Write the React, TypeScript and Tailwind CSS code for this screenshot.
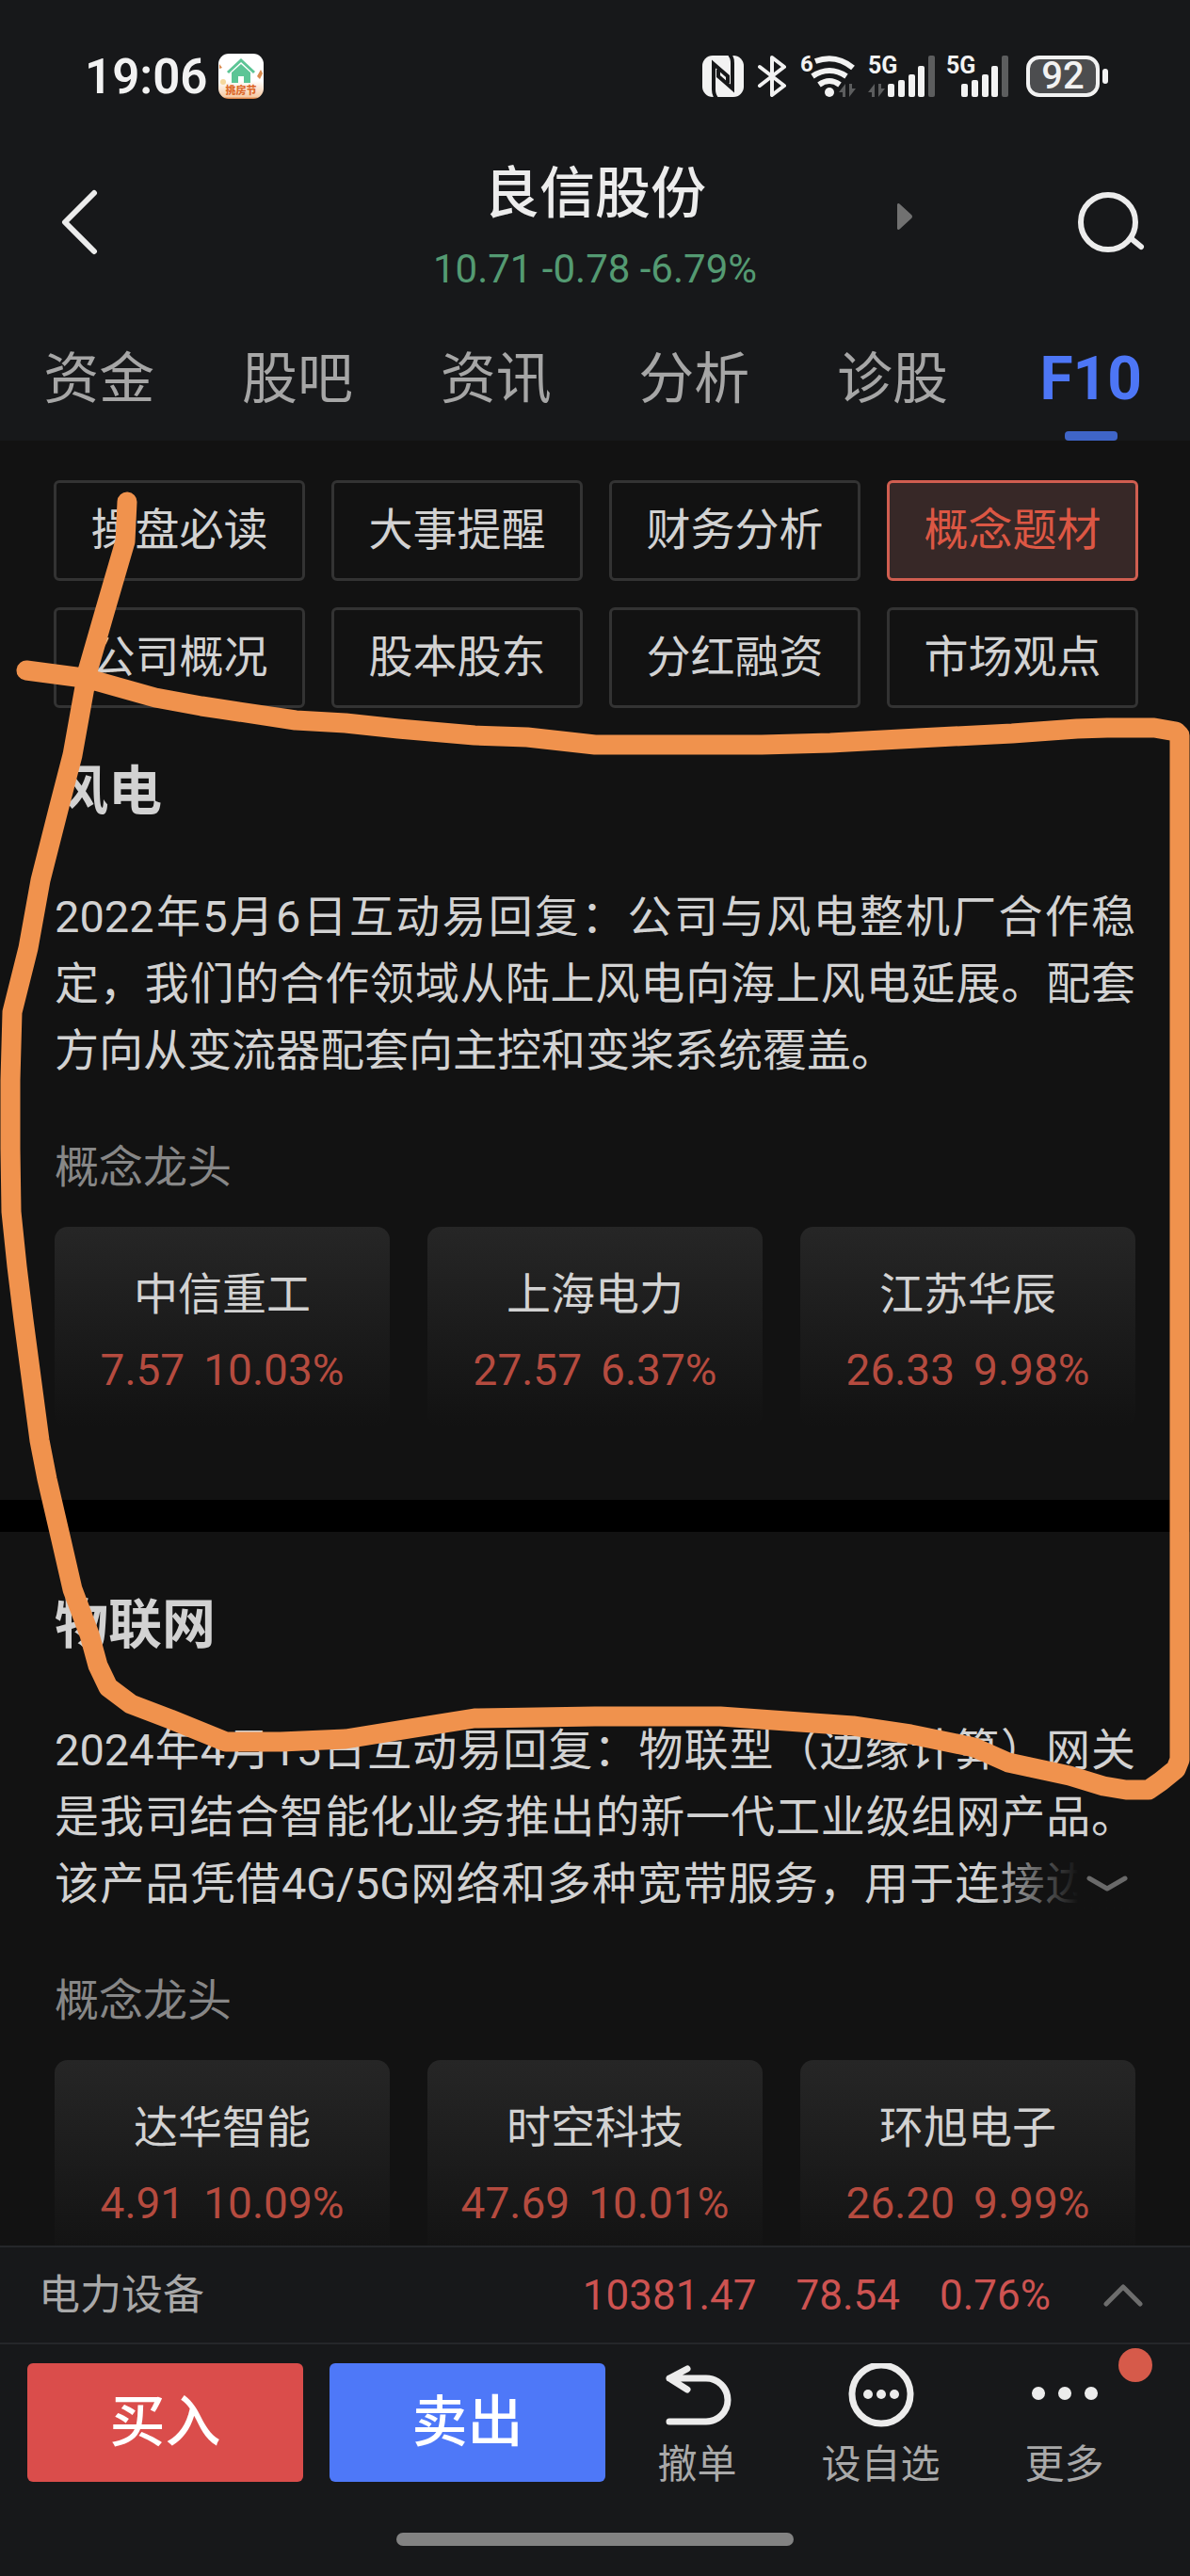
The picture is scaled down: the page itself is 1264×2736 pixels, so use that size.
import type { ReactNode } from "react";

type Stock = { name: string; price: string; change: string };

type Concept = {
  title: string;
  text: string;
  collapsed: boolean;
  leaders: Stock[];
};

const tabs = ["资金", "股吧", "资讯", "分析", "诊股", "F10"];

const sections = [
  "操盘必读",
  "大事提醒",
  "财务分析",
  "概念题材",
  "公司概况",
  "股本股东",
  "分红融资",
  "市场观点",
];

const concepts: Concept[] = [
  {
    title: "风电",
    text: "2022年5月6日互动易回复：公司与风电整机厂合作稳定，我们的合作领域从陆上风电向海上风电延展。配套方向从变流器配套向主控和变桨系统覆盖。",
    collapsed: false,
    leaders: [
      { name: "中信重工", price: "7.57", change: "10.03%" },
      { name: "上海电力", price: "27.57", change: "6.37%" },
      { name: "江苏华辰", price: "26.33", change: "9.98%" },
    ],
  },
  {
    title: "物联网",
    text: "2024年4月15日互动易回复：物联型（边缘计算）网关是我司结合智能化业务推出的新一代工业级组网产品。该产品凭借4G/5G网络和多种宽带服务，用于连接边缘",
    collapsed: true,
    leaders: [
      { name: "达华智能", price: "4.91", change: "10.09%" },
      { name: "时空科技", price: "47.69", change: "10.01%" },
      { name: "环旭电子", price: "26.20", change: "9.99%" },
    ],
  },
];

const DataArrows = ({ x }: { x: number }) => (
  <g fill="#5c5d5e">
    <path d={`M${x} 39l7-9v14h-3v-5z`} />
    <path d={`M${x + 18} 35l-7 9v-14h3v5z`} />
  </g>
);

const StatusBar = () => (
  <div className="flex h-[162px] items-center justify-between pl-[90px] pr-[87px]">
    <div className="flex items-center gap-3">
      <span className="text-[51px] font-semibold leading-none text-[#f2f2f2]">19:06</span>
      <svg className="h-12 w-12" viewBox="0 0 48 48" aria-hidden="true">
        <defs>
          <linearGradient id="appBase" x1="0" y1="0" x2="0" y2="1">
            <stop offset="0.6" stopColor="#ffffff" />
            <stop offset="0.95" stopColor="#f6cba6" />
            <stop offset="1" stopColor="#e07a36" />
          </linearGradient>
        </defs>
        <rect width="48" height="48" rx="11" fill="url(#appBase)" />
        <path d="M10 20L24 7l14 13" fill="none" stroke="#5cc596" strokeWidth="3" />
        <path d="M14 20l10-9 10 9v11h-7v-7h-6v7h-7z" fill="#5cc596" />
        <path d="M41 24l4-7 2 4-3 6zM1 11l3 4-3 1z" fill="#d98a4e" />
        <circle cx="5" cy="30" r="3" fill="#f5d79c" />
        <text x="24" y="43" textAnchor="middle" fontSize="11" fontWeight="900" fill="#dd6a2c">
          挑房节
        </text>
      </svg>
    </div>
    <div className="flex items-center gap-[14px]">
      <svg className="h-11 w-11" viewBox="0 0 44 44" aria-label="NFC">
        <rect width="44" height="44" rx="11" fill="#f2f2f2" />
        <g fill="none" stroke="#17181a" strokeWidth="4">
          <path d="M15 45Q12 42 12 36V9L27 22V29" />
          <path d="M29 -1Q32 2 32 8V35L17 22V15" />
        </g>
      </svg>
      <svg className="h-11 w-8" viewBox="0 0 32 44" aria-label="蓝牙">
        <path
          d="M3 12l26 20-13 10V2l13 10L3 32"
          fill="none"
          stroke="#f2f2f2"
          strokeWidth="4"
          strokeLinejoin="round"
          strokeLinecap="round"
        />
      </svg>
      <div className="mr-1 flex items-center gap-3">
        <svg className="h-11 w-[60px] overflow-visible" viewBox="0 0 60 44" aria-label="Wi-Fi">
          <text x="0" y="17" fontSize="24" fontWeight="700" fill="#f2f2f2">
            6
          </text>
          <g fill="none" stroke="#f2f2f2" strokeWidth="6">
            <path d="M16 6Q38-2 56 13" />
            <path d="M13 22Q31 10 49 22" />
            <path d="M20 31Q31 23 42 31" />
          </g>
          <circle cx="31" cy="39" r="5" fill="#f2f2f2" />
          <DataArrows x={41} />
        </svg>
        <svg className="h-11 w-[71px] overflow-visible" viewBox="0 0 71 44" aria-label="5G">
          <text x="0" y="19" fontSize="25" fontWeight="700" fill="#f2f2f2">
            5G
          </text>
          <DataArrows x={0} />
          <g fill="#f2f2f2">
            <rect x="21" y="30" width="7" height="14" rx="2" />
            <rect x="32" y="26" width="7" height="18" rx="2" />
            <rect x="43" y="20" width="7" height="24" rx="2" />
            <rect x="53" y="11" width="7" height="33" rx="2" />
          </g>
          <rect x="64" y="0" width="7" height="44" rx="2" fill="#5c5d5e" />
        </svg>
        <svg className="h-11 w-[67px] overflow-visible" viewBox="0 0 67 44" aria-label="5G">
          <text x="0" y="19" fontSize="25" fontWeight="700" fill="#f2f2f2">
            5G
          </text>
          <g fill="#f2f2f2">
            <rect x="16" y="30" width="7" height="14" rx="2" />
            <rect x="27" y="26" width="7" height="18" rx="2" />
            <rect x="38" y="20" width="7" height="24" rx="2" />
            <rect x="48" y="11" width="7" height="33" rx="2" />
          </g>
          <rect x="59" y="0" width="7" height="44" rx="2" fill="#5c5d5e" />
        </svg>
      </div>
      <div className="flex items-center gap-[3px]">
        <div className="flex h-11 w-[78px] items-center justify-center rounded-[14px] border-4 border-[#f2f2f2] bg-[#4c4d4f] text-[40px] font-medium leading-none text-[#f2f2f2]">
          92
        </div>
        <span className="h-4 w-[6px] rounded-sm bg-[#f2f2f2]" />
      </div>
    </div>
  </div>
);

const TitleBar = () => (
  <div className="grid h-[148px] grid-cols-3 items-center">
    <button aria-label="返回" className="w-fit pl-16">
      <svg className="h-[70px] w-[42px]" viewBox="0 0 42 70">
        <path
          d="M36 4L5 35l31 31"
          fill="none"
          stroke="#ececec"
          strokeWidth="6"
          strokeLinecap="round"
          strokeLinejoin="round"
        />
      </svg>
    </button>
    <div className="pt-2 text-center">
      <h1 className="text-[59px] font-medium leading-[72px] text-[#ececec]">良信股份</h1>
      <p className="mt-5 text-[42px] leading-[48px] text-[#549a72]">10.71 -0.78 -6.79%</p>
    </div>
    <div className="flex items-center justify-between pl-[110px] pr-12">
      <button aria-label="下一只">
        <svg className="mb-3 h-7 w-4" viewBox="0 0 16 28">
          <path d="M0 1Q1-1 3 1L15 12q2 2 0 4L3 27q-2 2-3 0z" fill="#717171" />
        </svg>
      </button>
      <button aria-label="搜索">
        <svg className="h-[72px] w-[72px]" viewBox="0 0 72 72">
          <g fill="none" stroke="#ececec" strokeWidth="6" strokeLinecap="round">
            <circle cx="33" cy="36" r="29" />
            <path d="M57 53l11 9" />
          </g>
        </svg>
      </button>
    </div>
  </div>
);

const TabBar = () => (
  <nav className="grid h-[158px] grid-cols-6">
    {tabs.map((tab) => {
      const active = tab === "F10";
      return (
        <button key={tab} className="flex flex-col items-center justify-between pt-[51px]">
          <span
            className={
              active
                ? "text-[64px] font-bold leading-[84px] text-[#4d76f6]"
                : "text-[59px] leading-[84px] text-[#a6a6a6]"
            }
          >
            {tab}
          </span>
          {active ? <span className="h-[10px] w-14 rounded-[4px] bg-[#3f65c8]" /> : null}
        </button>
      );
    })}
  </nav>
);

const LeaderCard = ({ stock }: { stock: Stock }) => (
  <a
    href="#"
    className="block rounded-[14px] bg-linear-to-b from-[#262626] to-[#121212] pb-[26px] pt-[37px] text-center"
  >
    <span className="block text-[47px] leading-[70px] text-[#d2d2d2]">{stock.name}</span>
    <span className="mt-[10px] flex justify-center gap-5 text-[46px] leading-[70px] text-[#b54b3f]">
      <span>{stock.price}</span>
      <span>{stock.change}</span>
    </span>
  </a>
);

const ConceptSection = ({ concept }: { concept: Concept }) => (
  <section className="px-[58px] pb-[77px]">
    <h2 className="text-[57px] font-bold leading-[80px] text-[#d2d2d2]">{concept.title}</h2>
    <div className="relative mt-[57px]">
      <p
        className={`text-justify text-[47px] leading-[71px] text-[#d2d2d2] ${
          concept.collapsed ? "[text-align-last:justify]" : ""
        }`}
      >
        {concept.text}
      </p>
      {concept.collapsed ? (
        <button
          aria-label="展开"
          className="absolute bottom-0 right-0 flex h-[71px] w-40 items-center justify-end bg-linear-to-r from-transparent to-[#121212] to-62% pr-2"
        >
          <svg className="h-5 w-11" viewBox="0 0 44 20">
            <path
              d="M3 4l19 11L41 4"
              fill="none"
              stroke="#6a6a6a"
              strokeWidth="5"
              strokeLinecap="round"
              strokeLinejoin="round"
            />
          </svg>
        </button>
      ) : null}
    </div>
    <h3 className="mt-[54px] text-[47px] leading-[70px] text-[#878787]">概念龙头</h3>
    <div className="mt-7 grid grid-cols-3 gap-10">
      {concept.leaders.map((stock) => (
        <LeaderCard key={stock.name} stock={stock} />
      ))}
    </div>
  </section>
);

const ActionButton = ({
  label,
  badge,
  children,
}: {
  label: string;
  badge?: boolean;
  children: ReactNode;
}) => (
  <button className="relative flex flex-1 flex-col items-center gap-3">
    <svg
      className="h-[72px] w-[72px]"
      viewBox="0 0 72 72"
      fill="none"
      stroke="#ececec"
      strokeWidth="7"
      strokeLinecap="round"
      strokeLinejoin="round"
    >
      {children}
    </svg>
    <span className="text-[42px] leading-[48px] text-[#a9a9a9]">{label}</span>
    {badge ? (
      <span className="absolute -top-4 right-1 h-9 w-9 rounded-full bg-[#d65a4a]" />
    ) : null}
  </button>
);

const Footer = () => (
  <footer className="bg-[#17181a]">
    <button className="flex h-[105px] w-full items-center border-y-2 border-[#25272a] pl-[41px] pr-[50px]">
      <span className="flex-1 text-left text-[44px] text-[#a9a9a9]">电力设备</span>
      <span className="flex gap-[42px] text-[44px] text-[#cd5351]">
        <span>10381.47</span>
        <span>78.54</span>
        <span>0.76%</span>
      </span>
      <svg className="ml-14 h-6 w-[42px]" viewBox="0 0 42 24">
        <path
          d="M3 21L21 3l18 18"
          fill="none"
          stroke="#6d6d6d"
          strokeWidth="5"
          strokeLinecap="round"
          strokeLinejoin="round"
        />
      </svg>
    </button>
    <div className="flex pl-[29px] pr-9 pt-5">
      <div className="flex w-[614px] items-start gap-7 text-[59px] font-medium text-white">
        <button className="h-[126px] flex-1 rounded-[6px] bg-[#da4d4b]">买入</button>
        <button className="h-[126px] flex-1 rounded-[6px] bg-[#4e78f8]">卖出</button>
      </div>
      <div className="flex flex-1">
        <ActionButton label="撤单">
          <path d="M6 16h39a22 22 0 0 1 0 46H6M25 6L6 16l19 12" />
        </ActionButton>
        <ActionButton label="设自选">
          <circle cx="36" cy="33" r="31" />
          <g fill="#ececec" stroke="none">
            <circle cx="22" cy="33" r="5" />
            <circle cx="36" cy="33" r="5" />
            <circle cx="50" cy="33" r="5" />
          </g>
        </ActionButton>
        <ActionButton label="更多" badge>
          <g fill="#ececec" stroke="none">
            <circle cx="8" cy="32" r="7" />
            <circle cx="36" cy="32" r="7" />
            <circle cx="64" cy="32" r="7" />
          </g>
        </ActionButton>
      </div>
    </div>
    <div className="flex justify-center pb-8 pt-12">
      <span className="h-[14px] w-1/3 rounded-full bg-[#828282]" />
    </div>
  </footer>
);

// Freehand marker drawn over the page
const Marker = () => (
  <svg
    className="pointer-events-none absolute inset-0 h-full w-full"
    viewBox="0 0 1264 2736"
    preserveAspectRatio="none"
    aria-hidden="true"
  >
    <path
      d="M135 533L133 575L112 647L93 713L77 802L62 860L43 935L30 1007L13 1075L11 1147V1220L12 1287L18 1345L25 1402L42 1530L50 1571L66 1640L77 1688L95 1736L104 1769L115 1792L139 1810L181 1826L240 1850H298L367 1847L435 1836L504 1825L632 1823H765L906 1833L967 1842L1035 1856L1071 1872L1136 1886L1172 1897L1196 1901H1220L1233 1892L1249 1879L1253 1869V781L1249 777L1226 773H1176L1144 774L1075 779L975 784L882 789L809 791H632L560 783L504 781L423 774L367 768L314 765L214 750L165 741L101 723L81 719L28 712"
      fill="none"
      stroke="#f0924d"
      strokeWidth="21"
      strokeLinecap="round"
      strokeLinejoin="round"
    />
  </svg>
);

export default function App() {
  return (
    <div className="relative flex h-screen flex-col overflow-hidden bg-[#121212] font-[Roboto,'Noto_Sans_CJK_SC',sans-serif]">
      <header className="bg-[#17181a]">
        <StatusBar />
        <TitleBar />
        <TabBar />
      </header>

      <main className="min-h-0 flex-1 overflow-hidden">
        <div className="grid grid-cols-4 gap-7 pl-[57px] pr-[55px] pt-[42px]">
          {sections.map((label) => (
            <button
              key={label}
              className={`h-[107px] rounded-[6px] border-[3px] text-[47px] ${
                label === "概念题材"
                  ? "border-[#d05e50] bg-[#372827] text-[#dc5744]"
                  : "border-[#333333] text-[#d2d2d2]"
              }`}
            >
              {label}
            </button>
          ))}
        </div>
        <div className="mt-[49px]">
          <ConceptSection concept={concepts[0]} />
          <div className="mb-[59px] h-[34px] bg-black" />
          <ConceptSection concept={concepts[1]} />
        </div>
      </main>

      <Footer />
      <Marker />
    </div>
  );
}
